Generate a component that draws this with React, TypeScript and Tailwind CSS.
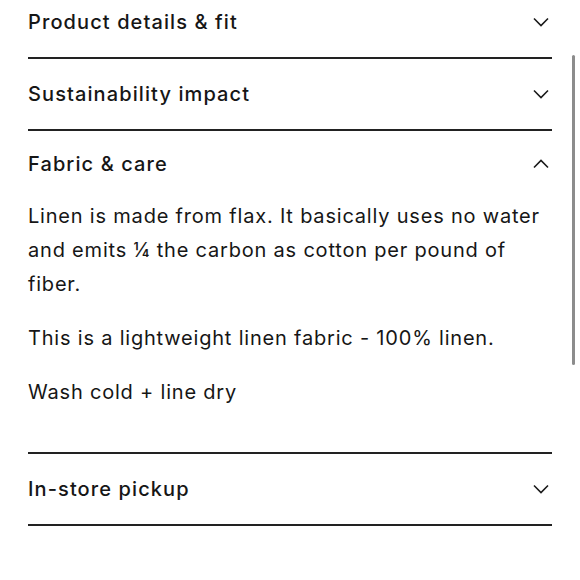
import React from 'react';

const sections = [
  { title: 'Product details & fit', open: false },
  { title: 'Sustainability impact', open: false },
  { title: 'Fabric & care', open: true },
  { title: 'In-store pickup', open: false },
];

function Chevron({ up }: { up?: boolean }) {
  return (
    <svg className="w-[18px] h-[18px] shrink-0" viewBox="0 0 18 18" fill="none" stroke="#1a1a1a" strokeWidth={1.6}>
      {up ? <path d="M2 12.5l7-7 7 7" /> : <path d="M2 5.5l7 7 7-7" />}
    </svg>
  );
}

export default function App() {
  return (
    <div
      className="relative w-[580px] h-[580px] overflow-hidden bg-white text-[#161616]"
      style={{ fontFamily: 'Inter, "Noto Sans", sans-serif' }}
    >
      <div className="mt-[-13px] px-[28px]">
        {sections.map((s) => (
          <div key={s.title} className="border-b-2 border-[#222]">
            <button
              type="button"
              className={`w-full flex items-center justify-between ${s.open ? 'h-[66px]' : 'h-[70px]'}`}
            >
              <span className="text-[20px] font-medium tracking-[1.1px]">{s.title}</span>
              <span className="mr-[2px]">
                <Chevron up={s.open} />
              </span>
            </button>
            {s.open && (
              <div className="mt-[2px] pb-[43px] text-[20px] leading-[34px] tracking-[0.8px] font-normal">
                <p>Linen is made from flax. It basically uses no water and emits ¼ the carbon as cotton per pound of fiber.</p>
                <p className="mt-[20px]">This is a lightweight linen fabric - 100% linen.</p>
                <p className="mt-[20px]">Wash cold + line dry</p>
              </div>
            )}
          </div>
        ))}
      </div>
      {/* overlay scroll indicator */}
      <div className="absolute left-[572px] top-[55px] w-[3px] h-[310px] rounded-full bg-[#8c8c8c]" />
    </div>
  );
}
